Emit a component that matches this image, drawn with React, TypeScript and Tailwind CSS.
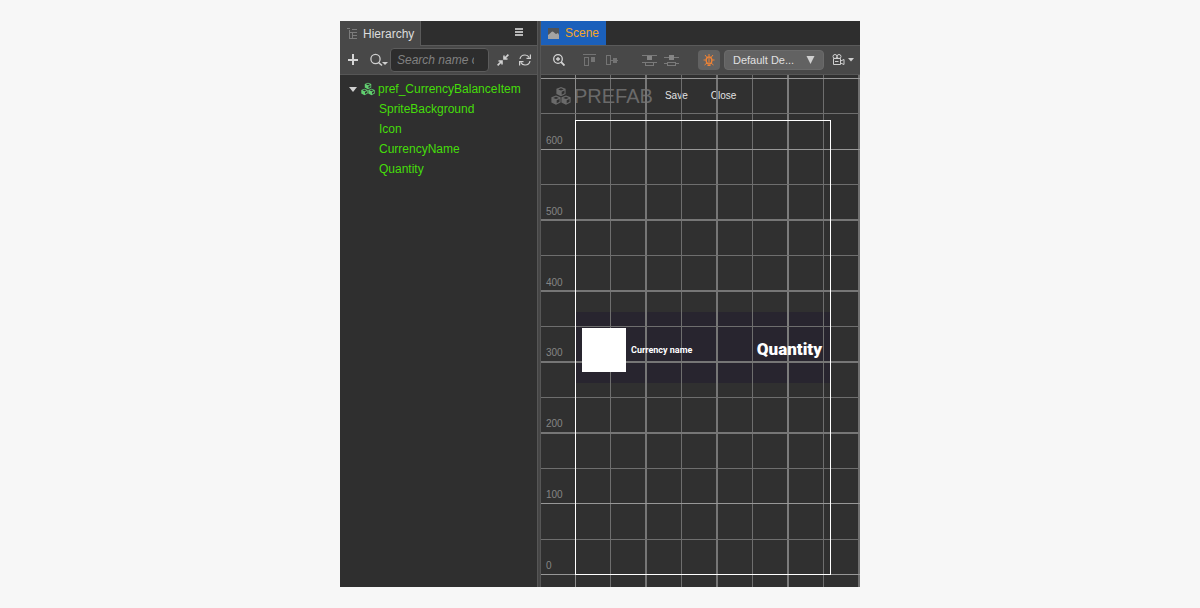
const nodes = ['SpriteBackground', 'Icon', 'CurrencyName', 'Quantity'];

const ticks = [
  { value: 600, top: 60 },
  { value: 500, top: 131 },
  { value: 400, top: 202 },
  { value: 300, top: 272 },
  { value: 200, top: 343 },
  { value: 100, top: 414 },
  { value: 0, top: 485 },
];

// [offset, thickness, colour]
const columns: [number, number, string][] = [
  [34, 1, '#8c8c8c'],
  [69, 1, '#6e6e6e'],
  [104, 2, '#767676'],
  [140, 1, '#6e6e6e'],
  [175, 2, '#767676'],
  [211, 1, '#6e6e6e'],
  [246, 2, '#7c7c7c'],
  [282, 1, '#6e6e6e'],
  [317, 2, '#707070'],
];

const rows: [number, number, string][] = [
  [3, 1, '#979797'],
  [38, 1, '#6e6e6e'],
  [74, 1, '#979797'],
  [109, 1, '#6e6e6e'],
  [144, 2, '#767676'],
  [180, 1, '#6e6e6e'],
  [215, 2, '#767676'],
  [251, 1, '#6e6e6e'],
  [286, 2, '#767676'],
  [322, 1, '#6e6e6e'],
  [357, 2, '#767676'],
  [393, 1, '#6e6e6e'],
  [428, 1, '#979797'],
  [464, 1, '#6e6e6e'],
  [499, 1, '#979797'],
];

// one cube: hexagon with the top and right faces cut out
const CUBE = 'M5 0 9.6 1.8V7L5 9.300.4 7V1.800zM5 1.200 2.200 2.400 5 3.600 7.800 2.400zM5.700 4.700V7.700L8.500 6.300V3.500z';

function CubesIcon({ size }: { size: number }) {
  return (
    <svg width={size} height={size} viewBox="0 0 20 20" fill="currentColor" fillRule="evenodd" className="shrink-0" aria-hidden="true">
      <path d={CUBE} transform="translate(5 1)" />
      <path d={CUBE} transform="translate(0 9.500)" />
      <path d={CUBE} transform="translate(10 9.500)" />
    </svg>
  );
}

function TreeIcon() {
  return (
    <svg width="12" height="12" viewBox="0 0 12 12" fill="#7c7c7c" shapeRendering="crispEdges" aria-hidden="true">
      <path d="M0 0h3v1H0zM2 2h1v9H2zM3 4h2v1H3zM3 10h2v1H3zM5 1h5v1H5zM6 4h4v1H6zM6 7h4v1H6zM6 10h4v1H6zM5 4h1v7H5z" />
    </svg>
  );
}

function SearchIcon() {
  return (
    <svg width="18" height="14" viewBox="0 0 18 14" fill="none" stroke="#cfcfcf" aria-hidden="true">
      <circle cx="5.5" cy="6" r="4.6" strokeWidth="1.3" />
      <path d="M8.500 9.500 12 12.500" strokeWidth="1.600" />
      <path d="M12 9h6l-3 3z" fill="#cfcfcf" stroke="none" />
    </svg>
  );
}

function CollapseIcon() {
  return (
    <svg width="12" height="12" viewBox="0 0 12 12" fill="none" stroke="#d0d0d0" strokeWidth="1.6" aria-hidden="true">
      <path d="M1.5 7H5v3.500M.6 11.400 4.600 7.400M10.500 5H7V1.500M11.400.6 7.400 4.600" />
    </svg>
  );
}

function RefreshIcon() {
  return (
    <svg width="12" height="12" viewBox="0 0 12 12" fill="none" stroke="#d0d0d0" strokeWidth="1.2" aria-hidden="true">
      <path d="M1 5C1.4 2.500 3.500 1 6 1c2 0 3.400 1 4.300 2.600M11 7c-.4 2.500-2.500 4-5 4-2 0-3.400-1-4.300-2.600" />
      <path d="M11.400 .5V4.400H7.500M.6 11.500V7.600h3.900" />
    </svg>
  );
}

function PictureIcon() {
  return (
    <svg width="12" height="12" viewBox="0 0 12 12" aria-hidden="true">
      <path d="M0 1h11v11H0z" fill="#505357" />
      <path d="M0 8c2-1 3-3.500 4.500-3.500S7 7 8 7s1-1 2-1l1 2v4H0z" fill="#a3a3a3" />
    </svg>
  );
}

function ZoomIcon() {
  return (
    <svg width="12" height="12" viewBox="0 0 12 12" fill="none" stroke="#d4d4d4" aria-hidden="true">
      <circle cx="5" cy="5" r="4.300" strokeWidth="1.300" />
      <path d="M8.200 8.200 11.500 11.500" strokeWidth="1.800" />
      <path d="M5 3v4M3 5h4" strokeWidth="1.300" />
    </svg>
  );
}

function AlignTopIcon() {
  return (
    <svg width="13" height="13" viewBox="0 0 13 13" shapeRendering="crispEdges" fill="#747474" aria-hidden="true">
      <path d="M0 0h13v1H0zM8 3h4v5H8z" />
      <path d="M1 3h5v9H1zM2 4v7h3V4z" fillRule="evenodd" />
    </svg>
  );
}

function AlignMiddleIcon() {
  return (
    <svg width="13" height="13" viewBox="0 0 13 13" shapeRendering="crispEdges" fill="#747474" aria-hidden="true">
      <path d="M7 4h4v5H7zM5 6h2v1H5zM11 6h1v1h-1z" />
      <path d="M0 1h5v10H0zM1 2v8h3V2z" fillRule="evenodd" />
    </svg>
  );
}

function SpreadTopIcon() {
  return (
    <svg width="15" height="13" viewBox="0 0 15 13" shapeRendering="crispEdges" fill="#7a7a7a" aria-hidden="true">
      <path d="M0 1h15v1H0zM0 8h15v1H0zM3 9h1v3H3zM11 9h1v3h-1zM3 11h9v1H3z" />
      <path d="M5 2h5v4H5z" fill="#858585" />
    </svg>
  );
}

function SpreadMiddleIcon() {
  return (
    <svg width="15" height="13" viewBox="0 0 15 13" shapeRendering="crispEdges" fill="#7a7a7a" aria-hidden="true">
      <path d="M0 3h15v1H0zM0 9h3v1H0zM12 9h3v1h-3zM3 8h9v1H3zM3 11h9v1H3zM3 8h1v4H3zM11 8h1v4h-1z" />
      <path d="M5 1h5v5H5z" fill="#858585" />
    </svg>
  );
}

function BugIcon() {
  return (
    <svg width="12" height="12" viewBox="0 0 12 12" fill="none" stroke="#ee8336" aria-hidden="true">
      <ellipse cx="6" cy="6.5" rx="2.800" ry="3.500" strokeWidth="1.400" />
      <path d="M6 4v5M6 0v2.500M2 1l2 2.500M10 1 8 3.500M.5 6H3M11.500 6H9M1.500 11 4 9M10.500 11 8 9M4.500 11.500h3" />
    </svg>
  );
}

function CameraIcon() {
  return (
    <svg width="13" height="12" viewBox="0 0 13 12" fill="none" stroke="#cfcfcf" aria-hidden="true">
      <circle cx="3" cy="2.500" r="2" />
      <circle cx="7" cy="2.500" r="2" />
      <path d="M1.500 4.500h7v6h-7zM8.500 7 12 5.500v5L8.500 9M3 7.500h3.500" />
    </svg>
  );
}

function Hierarchy() {
  return (
    <section className="flex w-[198px] shrink-0 flex-col border-r border-[#565656] bg-[#2f2f2f]">
      <div className="flex h-[25px] items-stretch justify-between border-b border-[#5a5a5a] bg-[#2e2e2e]">
        <h2 className="-mb-px flex w-[81px] items-center gap-1 border-r border-[#5a5a5a] bg-[#484848] pl-[7px] text-[#dcdcdc]">
          <TreeIcon />
          Hierarchy
        </h2>
        <button aria-label="Panel menu" className="flex w-9 flex-col items-center justify-center gap-px pb-0.5">
          <span className="h-0.5 w-2 bg-[#b8b8b8]" />
          <span className="h-0.5 w-2 bg-[#b8b8b8]" />
          <span className="h-0.5 w-2 bg-[#b8b8b8]" />
        </button>
      </div>
      <div className="flex h-[29px] items-center border-b border-[#565656] bg-[#484848] pl-[7px]">
        <button aria-label="Add node" className="mr-[11px] shrink-0">
          <svg width="12" height="12" viewBox="0 0 12 12" fill="none" stroke="#d6d6d6" strokeWidth="2" aria-hidden="true">
            <path d="M6 0v11M1 6h10" />
          </svg>
        </button>
        <button aria-label="Search type" className="mr-0.5 shrink-0">
          <SearchIcon />
        </button>
        <input
          type="text"
          aria-label="Search name or uuid"
          placeholder="Search name or uuid"
          className="h-6 w-[99px] min-w-0 rounded border border-[#5c5c5c] bg-[#2d2d2d] pr-[14px] pl-1.5 text-white italic placeholder:text-[#818181]"
        />
        <button aria-label="Collapse all" className="ml-2 shrink-0">
          <CollapseIcon />
        </button>
        <button aria-label="Refresh" className="ml-[10px] shrink-0">
          <RefreshIcon />
        </button>
      </div>
      <ul className="pt-1 leading-5 text-[#45dd0a]">
        <li>
          <div className="flex h-5 items-center gap-1 pl-[9px]">
            <svg width="8" height="5" viewBox="0 0 8 5" fill="#d0d0d0" aria-hidden="true">
              <path d="M0 0h8L4 5z" />
            </svg>
            <span className="text-[#61cf70]">
              <CubesIcon size={14} />
            </span>
            <span className="-ml-px">pref_CurrencyBalanceItem</span>
          </div>
          <ul className="pl-[39px]">
            {nodes.map((name) => (
              <li key={name}>{name}</li>
            ))}
          </ul>
        </li>
      </ul>
    </section>
  );
}

function SceneView() {
  return (
    <div className="relative flex-1 overflow-hidden bg-[#303030]">
      <div className="flex h-[42px] items-center pl-[10px] text-[10px] text-[#e2e2e2]">
        <div className="flex items-center gap-[3px] text-xl text-[#6a6a6a]">
          <CubesIcon size={20} />
          PREFAB
        </div>
        <button className="ml-3">Save</button>
        <button className="ml-[23px]">Close</button>
      </div>

      {/* background sprite sits under the grid, its content above it */}
      <div className="absolute top-[237px] left-[35px] h-[71px] w-[254px] bg-[#28252f]" />

      <svg className="pointer-events-none absolute inset-0 h-full w-full" shapeRendering="crispEdges" aria-hidden="true">
        {columns.map(([x, size, color]) => (
          <rect key={x} x={x} y="0" width={size} height="100%" fill={color} />
        ))}
        {rows.map(([y, size, color]) => (
          <rect key={y} x="0" y={y} width="100%" height={size} fill={color} />
        ))}
        <rect x="34.5" y="45.5" width="255" height="454" fill="none" stroke="#fff" />
      </svg>

      {ticks.map(({ value, top }) => (
        <span key={value} className="absolute left-[5px] text-[10px] leading-3 text-[#858585]" style={{ top }}>
          {value}
        </span>
      ))}

      <div className="absolute top-[237px] left-[35px] flex h-[71px] w-[254px] items-center pt-1 pr-2 pl-1.5 font-[Roboto,sans-serif] font-bold text-white">
        <div className="h-11 w-11 bg-white" />
        <span className="ml-[5px] text-[9px]">Currency name</span>
        <span className="ml-auto text-[17px] font-black">Quantity</span>
      </div>
    </div>
  );
}

function Scene() {
  return (
    <section className="flex min-w-0 flex-1 flex-col border-l border-[#565656] bg-[#303030]">
      <div className="flex h-[25px] border-b border-[#5a5a5a] bg-[#2e2e2e]">
        <h2 className="flex w-[65px] items-center gap-[5px] bg-[#1b60bb] pl-[7px] text-[#f3a528]">
          <PictureIcon />
          Scene
        </h2>
      </div>
      <div className="flex h-[29px] shrink-0 items-center border-b border-[#565656] bg-[#484848] pr-[6px] pl-3">
        <button aria-label="Zoom">
          <ZoomIcon />
        </button>
        <button aria-label="Align top" className="ml-[18px]">
          <AlignTopIcon />
        </button>
        <button aria-label="Align middle" className="ml-[10px]">
          <AlignMiddleIcon />
        </button>
        <button aria-label="Distribute top" className="ml-[23px]">
          <SpreadTopIcon />
        </button>
        <button aria-label="Distribute middle" className="ml-[7px]">
          <SpreadMiddleIcon />
        </button>
        <button aria-label="Debug" className="ml-auto flex h-5 w-[22px] items-center justify-center rounded bg-[#626262]">
          <BugIcon />
        </button>
        <div className="ml-1 grid h-5 w-[100px] items-center rounded border border-[#6a6a6a] bg-[#626262]">
          <select
            aria-label="Device"
            className="col-start-1 row-start-1 h-full w-full appearance-none bg-transparent pl-2 text-[11px] text-[#e0e0e0]"
          >
            <option>Default De...</option>
          </select>
          <svg className="pointer-events-none col-start-1 row-start-1 mr-2 justify-self-end" width="9" height="8" viewBox="0 0 9 8" fill="#d0d0d0" aria-hidden="true">
            <path d="M.5 0h8L4.500 8z" />
          </svg>
        </div>
        <button aria-label="Camera" className="ml-2 flex items-center gap-[3px]">
          <CameraIcon />
          <svg width="6" height="4" viewBox="0 0 6 4" fill="#d0d0d0" aria-hidden="true">
            <path d="M0 0h6L3 3.500z" />
          </svg>
        </button>
      </div>
      <SceneView />
    </section>
  );
}

export default function App() {
  return (
    <main className="flex min-h-screen justify-center bg-[#f7f7f7] px-5 py-[21px] font-['Liberation_Sans',Arial,sans-serif] text-xs">
      <div className="flex w-full max-w-[520px] gap-0.5 bg-[#464646]">
        <Hierarchy />
        <Scene />
      </div>
    </main>
  );
}
